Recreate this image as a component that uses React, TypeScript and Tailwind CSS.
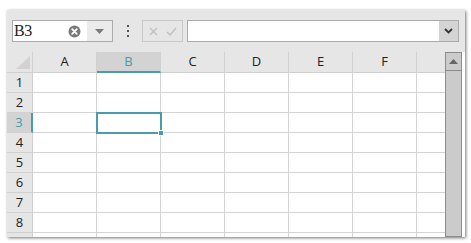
const cols = ["A", "B", "C", "D", "E", "F"];
const rows = [1, 2, 3, 4, 5, 6, 7, 8, 9];

const font = { fontFamily: '"Open Sans", "Noto Sans", sans-serif' };

export default function App() {
  return (
    <div className="w-[471px] h-[243px] bg-white overflow-hidden pt-[10px] pl-[7px]" style={font}>
      <div className="w-[458px] h-[227px] bg-[#e6e6e6] shadow-[1px_1px_3px_rgba(0,0,0,0.55)] flex flex-col overflow-hidden">
        {/* toolbar */}
        <div className="h-[42px] flex items-start pt-[10px] pl-[5px] shrink-0">
          <div className="flex h-[22px] w-[101px] border border-[#ababab]">
            <div className="flex-1 bg-white flex items-center pl-[1px] relative">
              <span className="text-[16px] leading-none text-[#222] tracking-[-0.5px]" style={{ fontFamily: '"Liberation Serif", serif' }}>B3</span>
              <svg className="absolute left-[55px] top-[4px]" width="13" height="13" viewBox="0 0 13 13">
                <circle cx="6.5" cy="6.5" r="6" fill="#7a7a7a" />
                <path d="M4.2 4.2 L8.8 8.8 M8.8 4.2 L4.2 8.8" stroke="#fff" strokeWidth="1.8" strokeLinecap="round" />
              </svg>
            </div>
            <div className="w-[25px] bg-[#ebebeb] flex items-center justify-center">
              <svg width="9" height="5" viewBox="0 0 9 5"><path d="M0 0 H9 L4.5 5 Z" fill="#7a7a7a" /></svg>
            </div>
          </div>
          <div className="w-[29px] h-[22px] flex flex-col items-center justify-center gap-[3px]">
            <div className="w-[2px] h-[2px] bg-[#555]" />
            <div className="w-[2px] h-[2px] bg-[#555]" />
            <div className="w-[2px] h-[2px] bg-[#555]" />
          </div>
          <div className="w-[41px] h-[22px] border border-[#c8c8c8] flex items-center justify-center gap-[8px]">
            <svg width="9" height="9" viewBox="0 0 9 9"><path d="M1 1 L8 8 M8 1 L1 8" stroke="#c0c0c0" strokeWidth="1.4" /></svg>
            <svg width="11" height="9" viewBox="0 0 11 9"><path d="M1 5 L4 8 L10 1" stroke="#c0c0c0" strokeWidth="1.4" fill="none" /></svg>
          </div>
          <div className="ml-[4px] w-[272px] h-[22px] border border-[#ababab] flex">
            <div className="flex-1 bg-white" />
            <div className="w-[19px] bg-[#d4d4d4] flex items-center justify-center">
              <svg width="9" height="6" viewBox="0 0 9 6"><path d="M1 1 L4.5 4.5 L8 1" stroke="#333" strokeWidth="1.8" fill="none" /></svg>
            </div>
          </div>
        </div>

        {/* sheet */}
        <div className="flex flex-1 min-h-0">
          <div className="w-[438px] overflow-hidden">
            <div className="grid grid-cols-[26px_repeat(6,64px)_28px] grid-rows-[21px] auto-rows-[20px]">
              <div className="bg-[#e6e6e6] border-r border-b border-[#d0d0d0] relative">
                <svg className="absolute right-[2px] bottom-[3px]" width="14" height="13" viewBox="0 0 14 13"><path d="M14 0 V13 H0 Z" fill="#d2d2d2" /></svg>
              </div>
              {cols.map((c) =>
                c === "B" ? (
                  <div key={c} className="bg-[#d3d3d3] border-r border-[#d0d0d0] border-b-2 border-b-[#4a9bab] flex items-center justify-center text-[13px] text-[#4a9bab]">
                    {c}
                  </div>
                ) : (
                  <div key={c} className="bg-[#e6e6e6] border-r border-b border-[#d0d0d0] flex items-center justify-center text-[13px] text-[#222]">
                    {c}
                  </div>
                )
              )}
              <div className="bg-[#e6e6e6] border-b border-[#d0d0d0]" />

              {rows.map((r) => (
                <div key={r} className="contents">
                  {r === 3 ? (
                    <div className="bg-[#d3d3d3] border-r-2 border-r-[#4a9bab] border-b border-[#d0d0d0] flex items-center justify-center text-[13px] text-[#4a9bab]">
                      {r}
                    </div>
                  ) : (
                    <div className="bg-[#e6e6e6] border-r border-b border-[#d0d0d0] flex items-center justify-center text-[13px] text-[#222]">
                      {r < 9 ? r : ""}
                    </div>
                  )}
                  {cols.map((c) => (
                    <div key={c} className={"bg-white border-r border-b border-[#d4d4d4] relative" + (r === 3 && c === "B" ? " z-10" : "")}>
                      {r === 3 && c === "B" && (
                        <>
                          <div className="absolute left-[-1px] top-[-1px] w-[66px] h-[22px] border-2 border-[#4a9bab]" />
                          <div className="absolute right-[-4px] bottom-[-4px] w-[6px] h-[6px] bg-[#4a9bab] border border-white" />
                        </>
                      )}
                    </div>
                  ))}
                  <div className="bg-white border-b border-[#d4d4d4]" />
                </div>
              ))}
            </div>
          </div>
          <div className="w-[17px] bg-[#cbcbcb] border border-[#8c8c8c] flex flex-col">
            <div className="h-[18px] border-b border-[#8c8c8c] flex items-center justify-center">
              <svg width="9" height="5" viewBox="0 0 9 5"><path d="M0 5 H9 L4.5 0 Z" fill="#666" /></svg>
            </div>
          </div>
          <div className="w-[3px] bg-white" />
        </div>
      </div>
    </div>
  );
}
